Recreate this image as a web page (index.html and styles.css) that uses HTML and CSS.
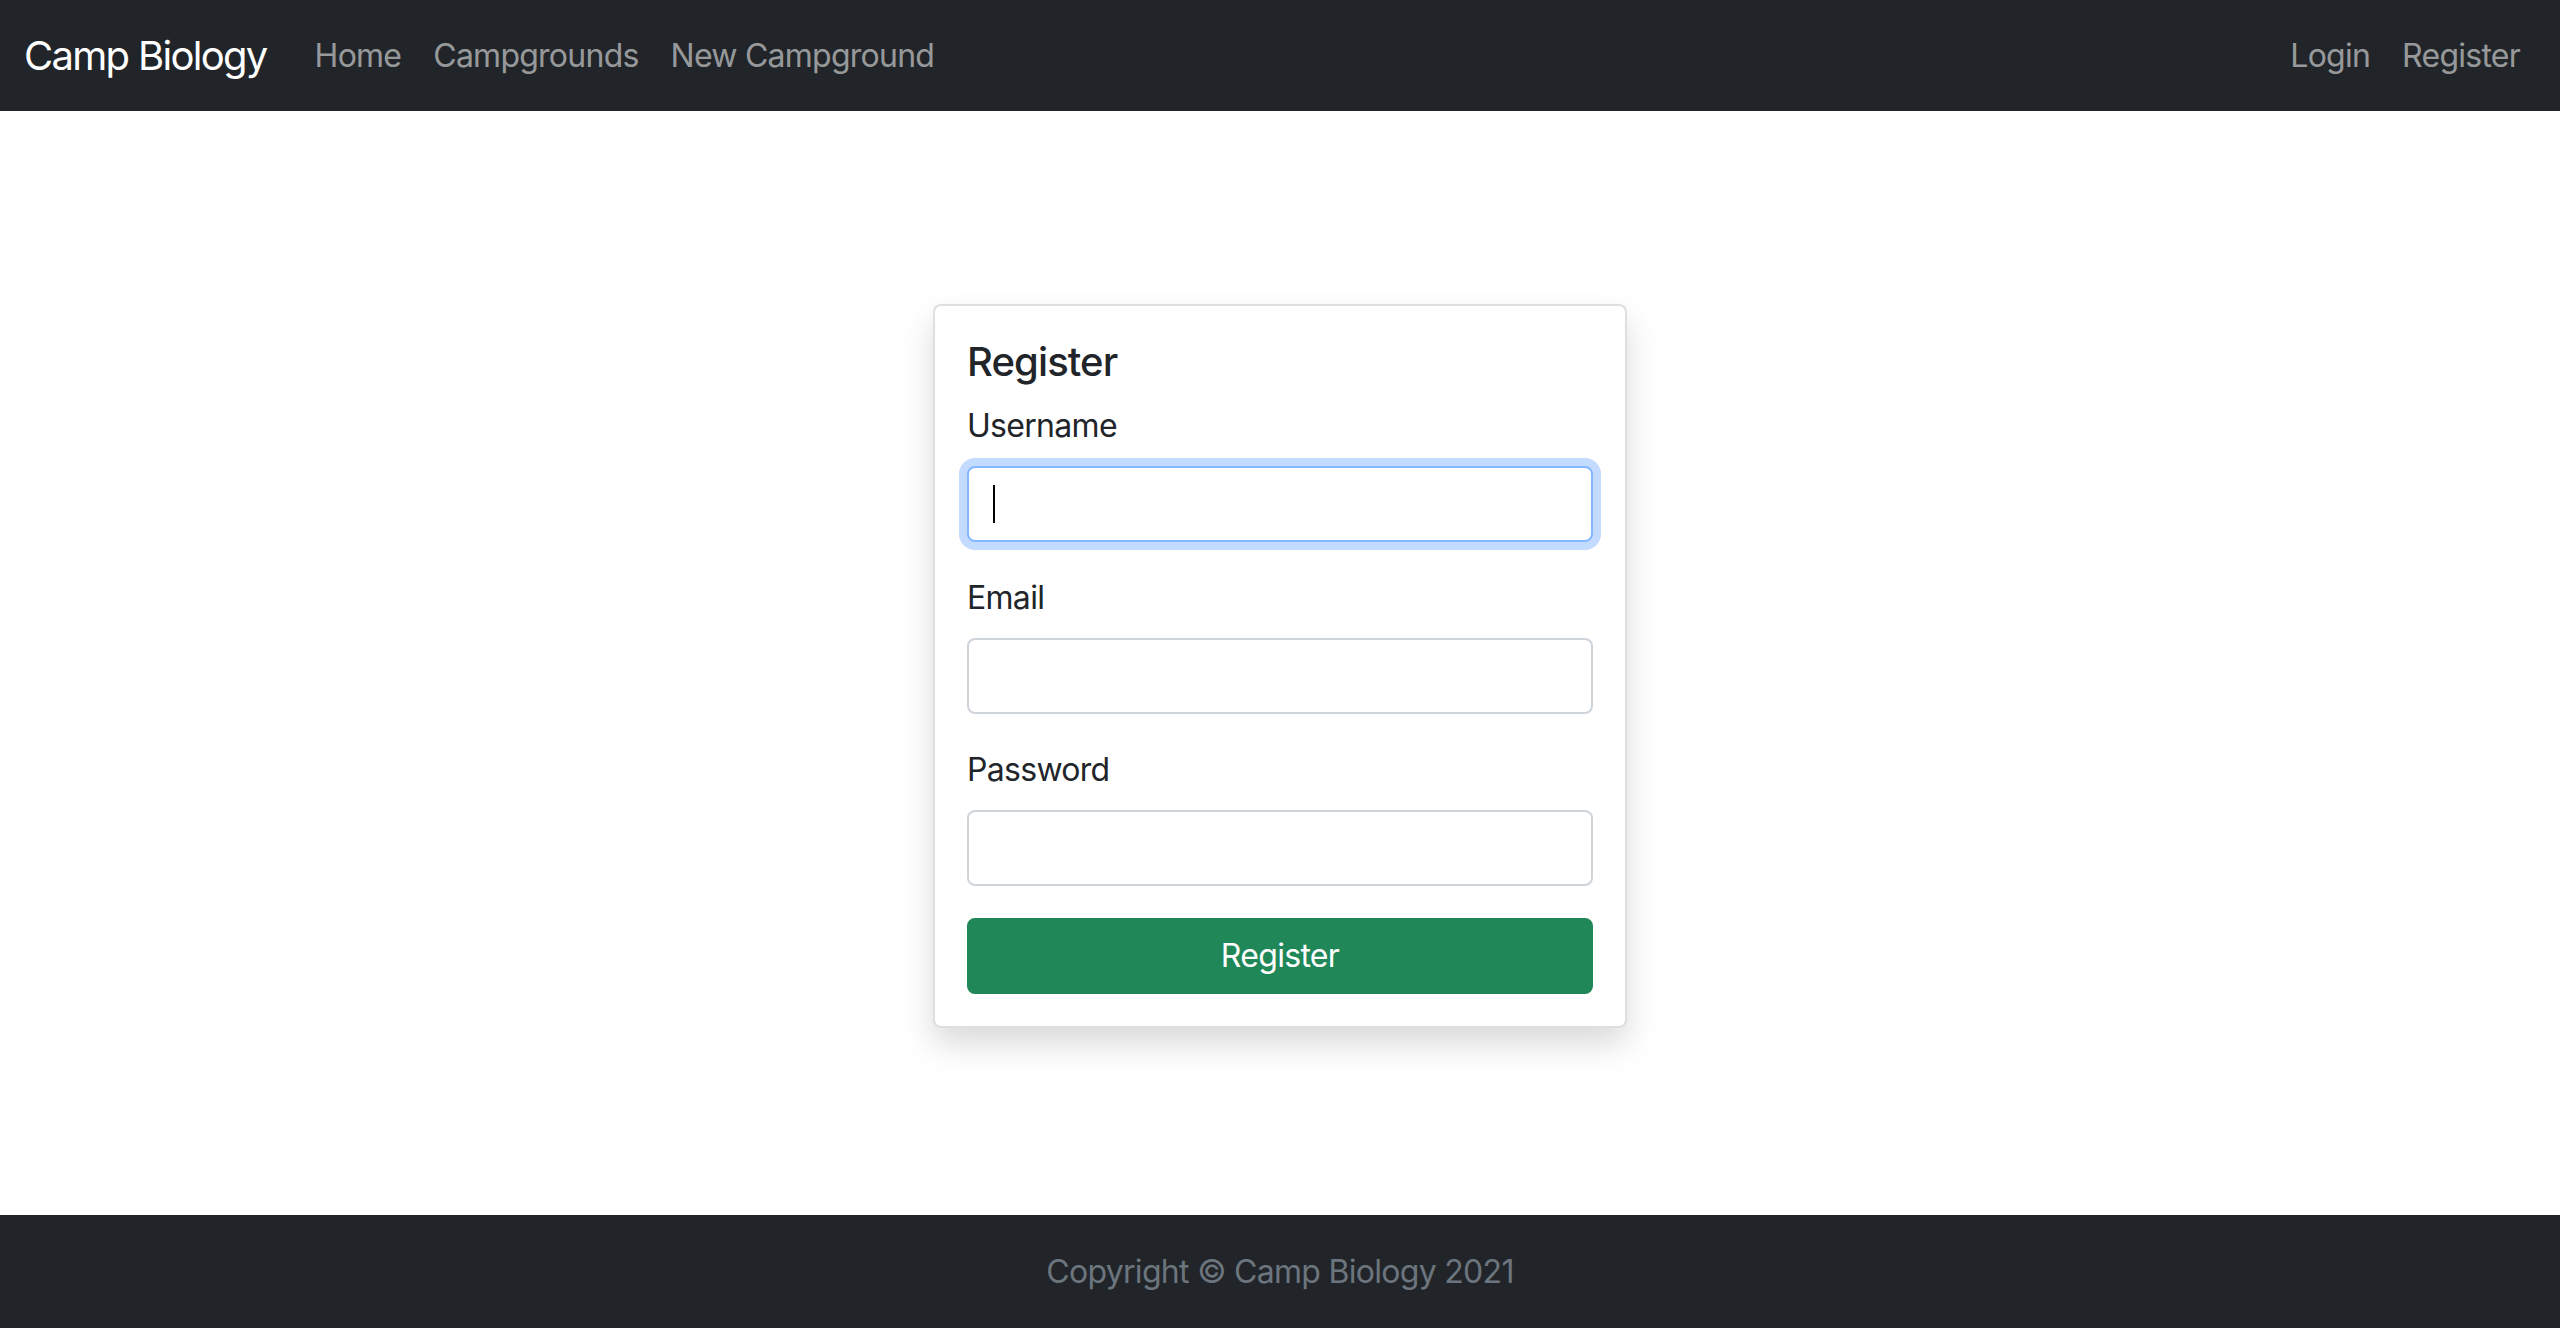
FILE: index.html
```html
<!DOCTYPE html>
<html lang="en">
<head>
<meta charset="utf-8">
<title>Camp Biology - Register</title>
<link rel="stylesheet" href="styles.css">
</head>
<body>
<nav class="navbar">
  <div class="nav-left">
    <a class="brand" href="#">Camp Biology</a>
    <a class="nav-link" href="#">Home</a>
    <a class="nav-link" href="#">Campgrounds</a>
    <a class="nav-link" href="#">New Campground</a>
  </div>
  <div class="nav-right">
    <a class="nav-link" href="#">Login</a>
    <a class="nav-link" href="#">Register</a>
  </div>
</nav>
<main class="main">
  <div class="card">
    <h5 class="card-title">Register</h5>
    <form class="form">
      <div class="field">
        <label class="label" for="username">Username</label>
        <div class="input-wrap">
          <input class="input input-focus" type="text" id="username">
          <span class="caret"></span>
        </div>
      </div>
      <div class="field">
        <label class="label" for="email">Email</label>
        <input class="input" type="email" id="email">
      </div>
      <div class="field">
        <label class="label" for="password">Password</label>
        <input class="input" type="password" id="password">
      </div>
      <button class="btn" type="button">Register</button>
    </form>
  </div>
</main>
<footer class="footer">
  <span class="footer-text">Copyright © Camp Biology 2021</span>
</footer>
</body>
</html>
```
FILE: styles.css
```css
* { box-sizing: border-box; }
html, body { margin: 0; padding: 0; }
body {
  height: 1328px;
  display: flex;
  flex-direction: column;
  font-family: Inter, "Liberation Sans", sans-serif;
  color: #212529;
  background: #fff;
  font-size: 32px;
  line-height: 48px;
}
.navbar {
  background: #212529;
  height: 111px;
  padding: 0 24px;
  display: flex;
  align-items: center;
  justify-content: space-between;
}
.nav-left, .nav-right { display: flex; align-items: center; }
.brand {
  color: #fff;
  text-decoration: none;
  font-size: 40px;
  line-height: 60px;
  margin-right: 32px;
  letter-spacing: -1.7px;
}
.nav-link {
  color: rgba(255,255,255,0.55);
  text-decoration: none;
  padding: 0 16px;
  font-size: 32px;
  line-height: 48px;
  letter-spacing: -0.75px;
}
.main {
  flex: 1;
  display: flex;
  align-items: center;
  justify-content: center;
  padding-top: 6px;
}
.card {
  width: 694px;
  border: 2px solid rgba(0,0,0,0.125);
  border-radius: 8px;
  padding: 32px;
  background: #fff;
  box-shadow: 0 16px 32px rgba(0,0,0,0.15);
}
.card-title {
  margin: 0 0 16px 0;
  font-size: 40px;
  line-height: 48px;
  font-weight: 500;
  letter-spacing: -0.9px;
}
.form { display: flex; flex-direction: column; }
.field { margin-bottom: 32px; display: flex; flex-direction: column; }
.label {
  margin-bottom: 16px;
  font-size: 32px;
  line-height: 48px;
  letter-spacing: -0.7px;
}
.input-wrap { position: relative; }
.input {
  display: block;
  width: 100%;
  height: 76px;
  padding: 12px 24px;
  font-size: 32px;
  font-family: inherit;
  border: 2px solid #ced4da;
  border-radius: 8px;
  background: #fff;
  outline: none;
}
.input-focus {
  border-color: #86b7fe;
  box-shadow: 0 0 0 8px rgba(13,110,253,0.25);
}
.caret {
  position: absolute;
  left: 26px;
  top: 19px;
  width: 2px;
  height: 38px;
  background: #000;
}
.btn {
  height: 76px;
  width: 100%;
  border: 2px solid #208759;
  background: #208759;
  color: #fff;
  border-radius: 8px;
  font-family: inherit;
  font-size: 32px;
  line-height: 48px;
  letter-spacing: -0.7px;
  padding: 12px 24px;
}
.footer {
  background: #212529;
  height: 113px;
  display: flex;
  align-items: center;
  justify-content: center;
}
.footer-text {
  color: #6c757d;
  font-size: 32px;
  line-height: 48px;
  letter-spacing: -0.7px;
}
```
